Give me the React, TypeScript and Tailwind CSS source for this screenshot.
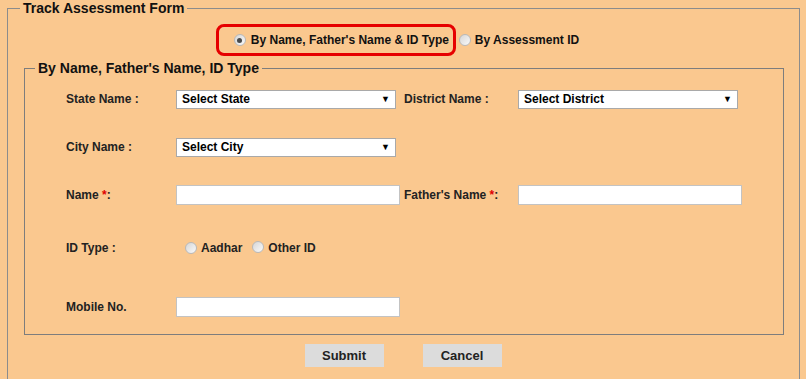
import React from 'react';

const font = { fontFamily: '"Liberation Sans", Arial, sans-serif' };

function Radio({ checked = false }: { checked?: boolean }) {
  return (
    <span className="inline-flex h-[12px] w-[12px] shrink-0 items-center justify-center rounded-full border border-[#b9b9b9] bg-gradient-to-br from-[#d6d6d6] to-[#fafafa]">
      {checked && <span className="h-[5px] w-[5px] rounded-full bg-[#4a4a4a]" />}
    </span>
  );
}

function FakeSelect({ label }: { label: string }) {
  return (
    <div className="flex h-[19px] w-[220px] items-center justify-between border border-[#a9a9a9] bg-white pl-[5px] pr-[5px] text-[12px] font-bold text-black">
      <span>{label}</span>
      <span className="text-[9px] leading-none">▼</span>
    </div>
  );
}

function TextBox() {
  return <div className="h-[20px] w-[224px] border border-[#c3c3c3] bg-white" />;
}

function Label({ children }: { children: React.ReactNode }) {
  return <span className="text-[12px] font-bold text-[#222]">{children}</span>;
}

export default function App() {
  return (
    <div className="h-[379px] w-[806px] overflow-hidden bg-[#fac88f] pl-[7px] pr-[6px]" style={font}>
      <fieldset className="h-[420px] border border-[#8c8c8c] pl-[12px] pr-[15px]">
        <legend className="px-[3px] text-[14px] font-bold leading-[16px] text-[#111]">Track Assessment Form</legend>

        <div className="mt-[8px] flex items-center justify-center pr-[9px]">
          <div className="flex h-[32px] w-[240px] items-center gap-[5px] rounded-[8px] border-[3px] border-[#e60000] pl-[15px]">
            <Radio checked />
            <span className="text-[12px] font-bold text-[#111]">By Name, Father's Name &amp; ID Type</span>
          </div>
          <div className="ml-[3px] flex items-center gap-[4px]">
            <Radio />
            <span className="text-[12px] font-bold text-[#111]">By Assessment ID</span>
          </div>
        </div>

        <fieldset className="ml-[4px] mt-[4px] border border-[#7d7d7d] pl-[10px] pb-[16px]">
          <legend className="px-[3px] text-[14px] font-bold leading-[16px] text-[#111]">By Name, Father's Name, ID Type</legend>

          <div className="pl-[31px] pt-[12px]">
            <div className="grid h-[22px] grid-cols-[110px_228px_114px_auto] items-center">
              <Label>State Name :</Label>
              <FakeSelect label="Select State" />
              <Label>District Name :</Label>
              <FakeSelect label="Select District" />
            </div>

            <div className="mt-[26px] grid h-[22px] grid-cols-[110px_228px_114px_auto] items-center">
              <Label>City Name :</Label>
              <FakeSelect label="Select City" />
            </div>

            <div className="mt-[26px] grid h-[22px] grid-cols-[110px_228px_114px_auto] items-center">
              <Label>
                Name <span className="text-[#e00000]">*</span>:
              </Label>
              <TextBox />
              <Label>
                Father's Name <span className="text-[#e00000]">*</span>:
              </Label>
              <TextBox />
            </div>

            <div className="mt-[30px] grid h-[22px] grid-cols-[110px_228px_114px_auto] items-center">
              <Label>ID Type :</Label>
              <div className="flex items-center pl-[9px]">
                <Radio />
                <span className="ml-[4px] text-[12px] font-bold text-[#222]">Aadhar</span>
                <span className="ml-[10px]"><Radio /></span>
                <span className="ml-[4px] text-[12px] font-bold text-[#222]">Other ID</span>
              </div>
            </div>

            <div className="mt-[38px] grid h-[22px] grid-cols-[110px_228px_114px_auto] items-center">
              <Label>Mobile No.</Label>
              <TextBox />
            </div>
          </div>
        </fieldset>

        <div className="mt-[9px] flex justify-center gap-[39px] pl-[2px]">
          <button className="h-[23px] w-[79px] bg-[#dcdcdc] text-[13px] font-bold text-[#222]">Submit</button>
          <button className="h-[23px] w-[79px] bg-[#dcdcdc] text-[13px] font-bold text-[#222]">Cancel</button>
        </div>
      </fieldset>
    </div>
  );
}
